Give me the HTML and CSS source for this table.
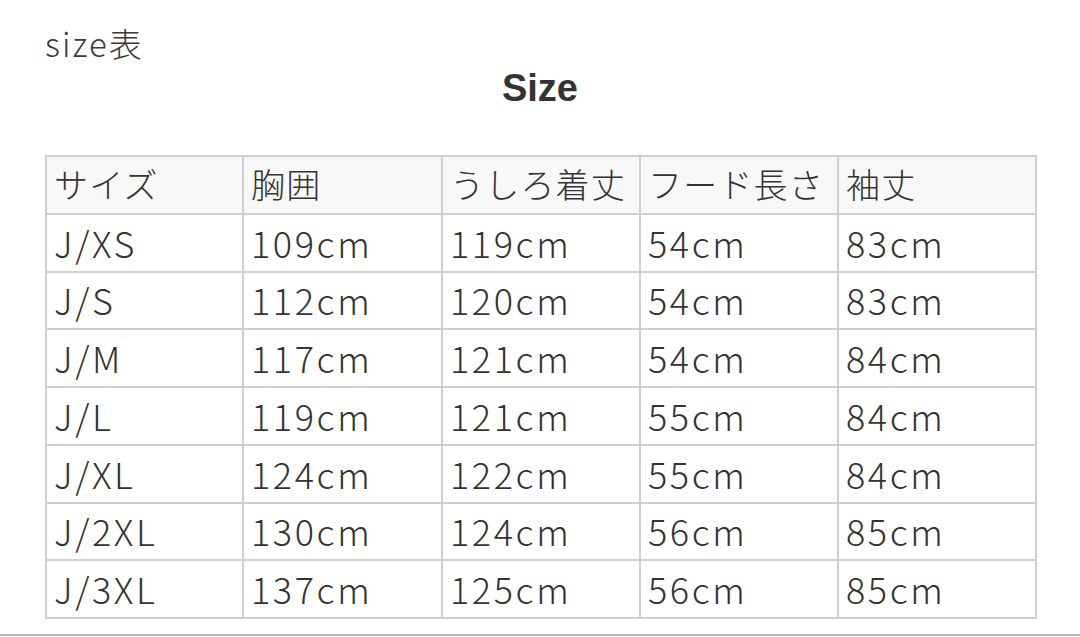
FILE: index.html
```html
<!DOCTYPE html>
<html lang="ja">
<head>
<meta charset="utf-8">
<link rel="stylesheet" href="styles.css">
</head>
<body>
<div class="page">
  <p class="label">size表</p>
  <h2 class="title">Size</h2>
  <table class="size-table">
    <colgroup>
      <col class="c1"><col class="c2"><col class="c3"><col class="c4"><col class="c5">
    </colgroup>
    <thead>
      <tr><th>サイズ</th><th>胸囲</th><th>うしろ着丈</th><th>フード長さ</th><th>袖丈</th></tr>
    </thead>
    <tbody>
      <tr><td>J/XS</td><td>109cm</td><td>119cm</td><td>54cm</td><td>83cm</td></tr>
      <tr><td>J/S</td><td>112cm</td><td>120cm</td><td>54cm</td><td>83cm</td></tr>
      <tr><td>J/M</td><td>117cm</td><td>121cm</td><td>54cm</td><td>84cm</td></tr>
      <tr><td>J/L</td><td>119cm</td><td>121cm</td><td>55cm</td><td>84cm</td></tr>
      <tr><td>J/XL</td><td>124cm</td><td>122cm</td><td>55cm</td><td>84cm</td></tr>
      <tr><td>J/2XL</td><td>130cm</td><td>124cm</td><td>56cm</td><td>85cm</td></tr>
      <tr><td>J/3XL</td><td>137cm</td><td>125cm</td><td>56cm</td><td>85cm</td></tr>
    </tbody>
  </table>
</div>
<div class="rule"></div>
</body>
</html>
```
FILE: styles.css
```css
html, body {
  margin: 0;
  padding: 0;
  background: #fff;
}
body {
  font-family: "Noto Sans CJK JP", "Noto Sans", sans-serif;
  color: #333;
  width: 1080px;
  height: 637px;
  overflow: hidden;
  position: relative;
}
.page {
  padding: 0 45px;
}
.label {
  margin: 0;
  padding-top: 20px;
  height: 48px;
  font-size: 33px;
  line-height: 46px;
  letter-spacing: 2px;
  font-weight: 300;
  color: #3a3a3a;
}
.title {
  margin: 0;
  height: 87px;
  text-align: center;
  font-family: "Liberation Sans", Arial, sans-serif;
  font-weight: bold;
  font-size: 38px;
  line-height: 40px;
  color: #333;
}
.size-table {
  border-collapse: collapse;
  width: 990px;
  table-layout: fixed;
}
.c1 { width: 197px; }
.c2 { width: 199px; }
.c3 { width: 198px; }
.c4 { width: 198px; }
.c5 { width: 198px; }
.size-table th,
.size-table td {
  border: 2px solid #cfcfcf;
  height: 53.75px;
  padding: 0 0 2px 7px;
  text-align: left;
  font-weight: 300;
  line-height: 50px;
  white-space: nowrap;
  color: #333;
  overflow: hidden;
}
.size-table th {
  background: #f8f8f8;
  font-size: 34px;
  letter-spacing: 1.2px;
}
.size-table td {
  font-size: 36px;
  letter-spacing: 2.6px;
}
.rule {
  position: absolute;
  left: 0;
  right: 0;
  top: 634px;
  height: 2px;
  background: #b5b5b5;
}
```
